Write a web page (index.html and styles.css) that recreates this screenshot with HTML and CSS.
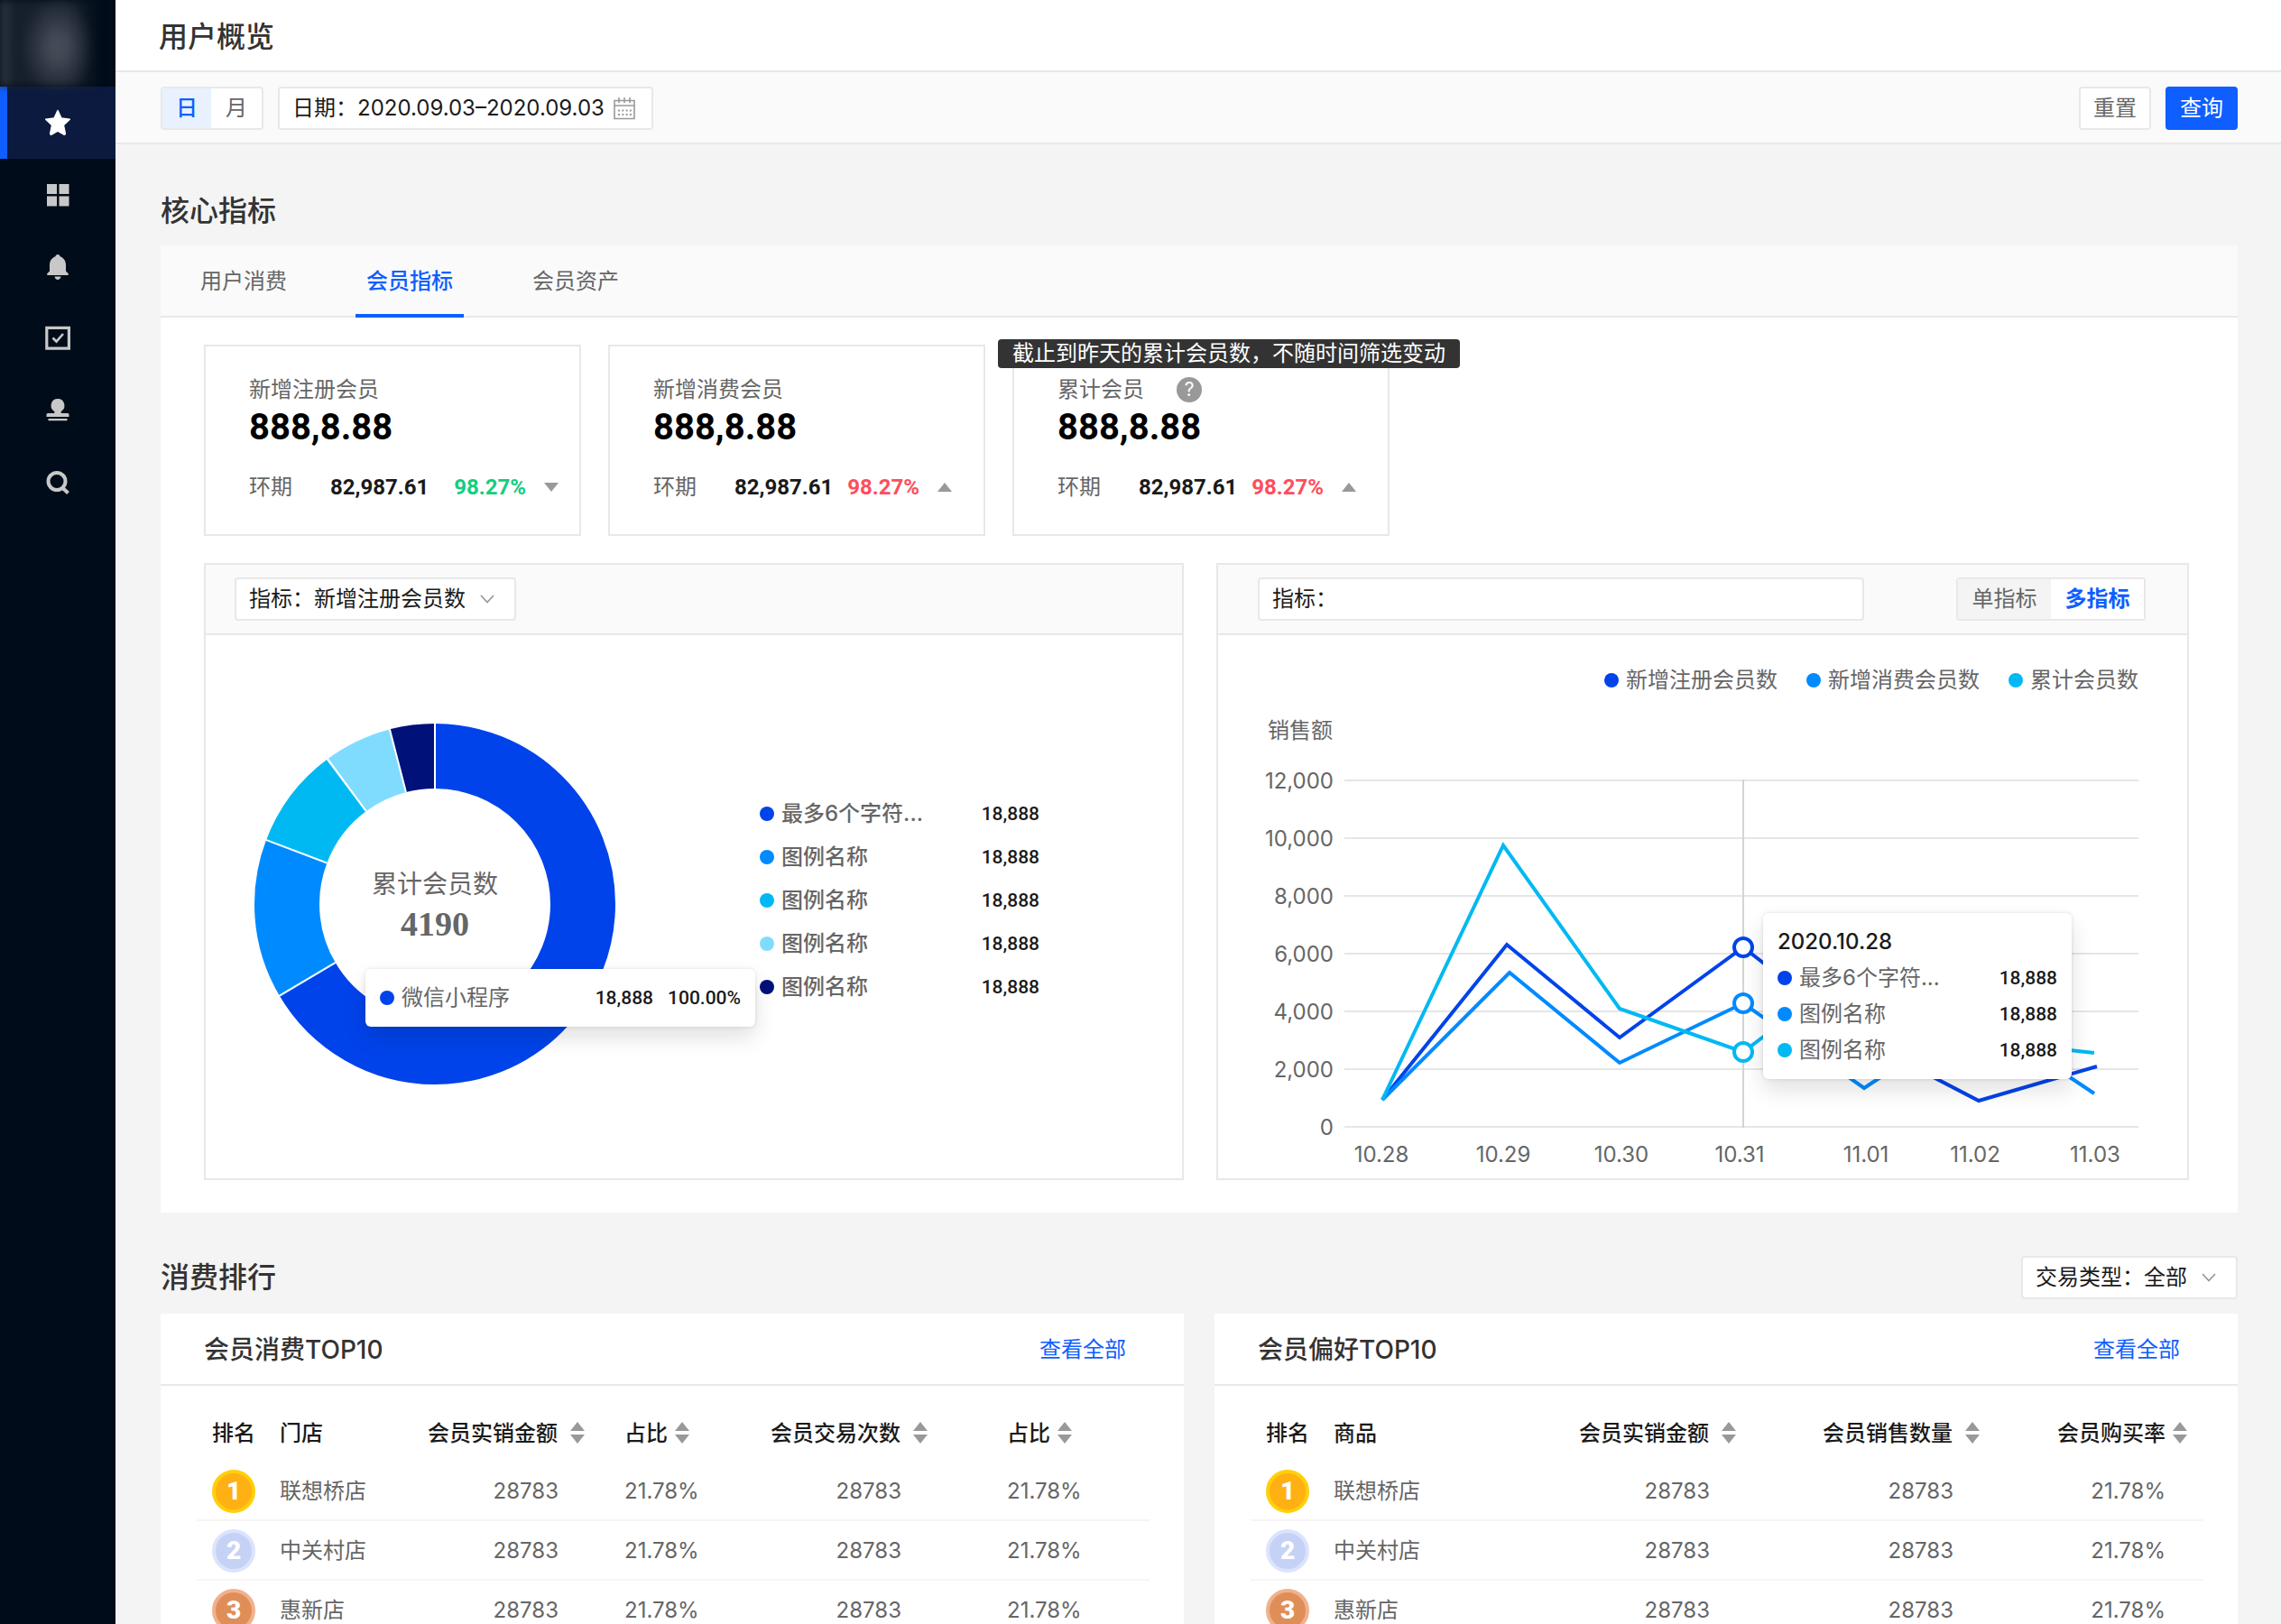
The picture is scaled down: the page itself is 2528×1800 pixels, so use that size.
FILE: index.html
```html
<!DOCTYPE html>
<html lang="zh-CN">
<head>
<meta charset="utf-8">
<title>用户概览</title>
<link rel="stylesheet" href="styles.css">
</head>
<body>
<div class="app">
  <nav class="sidebar">
    <div class="brand"></div>
    <a class="nav-item nav-item--active" href="#" aria-label="收藏"><svg width="32" height="32" viewBox="0 0 32 32"><path d="M16 2.500l4 8.600 9.300 1.100-6.900 6.400 1.900 9.400c.1.900-.6 1.400-1.400 1L16 25l-6.900 4c-.8.400-1.500-.1-1.400-1l1.900-9.400-6.900-6.400 9.300-1.100z" stroke="currentColor" stroke-width="1.500" stroke-linejoin="round"/></svg></a>
    <a class="nav-item" href="#" aria-label="概览"><svg width="32" height="32" viewBox="0 0 32 32"><path d="M4 4h11v11H4zM17.500 4h11v11h-11zM4 17.500h11v11H4zM17.500 17.500h11v11h-11z"/></svg></a>
    <a class="nav-item" href="#" aria-label="通知"><svg width="32" height="32" viewBox="0 0 32 32"><path d="M16 2c1.400 0 2.200 1 2.500 2.200 4 1.400 6.500 5 6.500 9.300v7l2.500 2.500c1 1 .5 2-.8 2H5.300c-1.300 0-1.800-1-.8-2L7 20.500v-7c0-4.300 2.500-7.900 6.500-9.300C13.800 3 14.600 2 16 2zM12.500 26.500h7c-.3 2.200-1.800 3.500-3.500 3.500s-3.200-1.300-3.500-3.500z"/></svg></a>
    <a class="nav-item" href="#" aria-label="任务"><svg width="32" height="32" viewBox="0 0 32 32" fill="none" stroke="currentColor" stroke-width="3.200"><path d="M3.800 3.300h24.600v22.800H3.800z"/><path d="M10.500 14.500l4 4 7.500-8.500" stroke-width="2.600"/></svg></a>
    <a class="nav-item" href="#" aria-label="会员"><svg width="32" height="32" viewBox="0 0 32 32"><path d="M16 2a7.300 7.500 0 0 1 4.500 13.500c-1 .8-1.500 1.500-.5 2.500h7a1.500 1.500 0 0 1 1.500 1.500V22h-25v-2.500A1.500 1.500 0 0 1 5 18h7c1-1 .5-1.700-.5-2.500A7.300 7.500 0 0 1 16 2zM5.500 24h21v2.200h-21z"/></svg></a>
    <a class="nav-item" href="#" aria-label="搜索"><svg width="32" height="32" viewBox="0 0 32 32" fill="none" stroke="currentColor" stroke-width="4"><circle cx="15" cy="13.500" r="9.500"/><path d="M20.500 20l7 6.500"/></svg></a>
  </nav>

  <main class="main">
    <header class="page-header"><h1 class="page-title">用户概览</h1></header>

    <form class="filters">
      <div class="segment">
        <button class="segment-btn segment-btn--day" type="button">日</button>
        <button class="segment-btn" type="button">月</button>
      </div>
      <div class="field field--date">
        <label for="date-range">日期：</label>
        <input id="date-range" class="field-input" type="text" value="2020.09.03–2020.09.03">
        <svg class="calendar" width="24" height="26" viewBox="0 0 24 26" fill="none" stroke="#999" stroke-width="1.600"><path d="M1 4.500h22v20H1zM1 10h22M6 1v6M12 1v6M18 1v6"/><path d="M5 15.500h15M5 20h15" stroke-width="2" stroke-dasharray="2 2.300"/></svg>
      </div>
      <div class="filter-actions">
        <button class="btn" type="reset">重置</button>
        <button class="btn btn--primary" type="button">查询</button>
      </div>
    </form>

    <div class="content">
      <h2 class="section-title">核心指标</h2>
      <section class="panel">
        <div class="tabs" role="tablist">
          <button class="tab" role="tab" type="button">用户消费</button>
          <button class="tab tab--active" role="tab" type="button">会员指标</button>
          <button class="tab" role="tab" type="button">会员资产</button>
        </div>

        <div class="metrics">
          <article class="metric">
            <div class="metric-label">新增注册会员</div>
            <div class="metric-value">888,8.88</div>
            <div class="metric-row metric-row--down"><span class="metric-period">环期</span><b class="metric-num">82,987.61</b><b class="metric-rate">98.27%</b><svg width="16" height="10" viewBox="0 0 16 10"><path d="M0 0h16l-8 10z"/></svg></div>
          </article>
          <article class="metric">
            <div class="metric-label">新增消费会员</div>
            <div class="metric-value">888,8.88</div>
            <div class="metric-row"><span class="metric-period">环期</span><b class="metric-num">82,987.61</b><b class="metric-rate">98.27%</b><svg width="16" height="10" viewBox="0 0 16 10"><path d="M0 10h16L8 0z"/></svg></div>
          </article>
          <article class="metric">
            <div class="hint" role="tooltip">截止到昨天的累计会员数，不随时间筛选变动</div>
            <div class="metric-label">累计会员<button class="help" type="button">?</button></div>
            <div class="metric-value">888,8.88</div>
            <div class="metric-row"><span class="metric-period">环期</span><b class="metric-num">82,987.61</b><b class="metric-rate">98.27%</b><svg width="16" height="10" viewBox="0 0 16 10"><path d="M0 10h16L8 0z"/></svg></div>
          </article>
        </div>

        <div class="charts">
          <article class="chart">
            <header class="chart-head">
              <div class="field">
                <label for="metric">指标：</label>
                <select id="metric" class="field-select field-select--metric"><option>新增注册会员数</option></select>
              </div>
            </header>
            <div class="donut-body">
              <div class="donut">
                <svg viewBox="0 0 400 400" fill="none">
                  <g transform="rotate(-90 200 200)" stroke-width="72">
                    <circle cx="200" cy="200" r="164" pathLength="360" stroke="#0043ea" stroke-dasharray="240 120"/>
                    <circle cx="200" cy="200" r="164" pathLength="360" stroke="#008aff" stroke-dasharray="52 308" stroke-dashoffset="-239"/>
                    <circle cx="200" cy="200" r="164" pathLength="360" stroke="#00b9f2" stroke-dasharray="33 327" stroke-dashoffset="-290.500"/>
                    <circle cx="200" cy="200" r="164" pathLength="360" stroke="#80dcff" stroke-dasharray="23 337" stroke-dashoffset="-323"/>
                    <circle cx="200" cy="200" r="164" pathLength="360" stroke="#00117a" stroke-dasharray="14.500 345.500" stroke-dashoffset="-345.500"/>
                    <g stroke="#fff" stroke-width="2">
                      <path d="M328 200h73"/>
                      <path d="M328 200h73" transform="rotate(239.500 200 200)"/>
                      <path d="M328 200h73" transform="rotate(290.800 200 200)"/>
                      <path d="M328 200h73" transform="rotate(323.500 200 200)"/>
                      <path d="M328 200h73" transform="rotate(345.500 200 200)"/>
                    </g>
                  </g>
                </svg>
                <div class="donut-text"><span>累计会员数</span><b class="donut-total">4190</b></div>
                <div class="tip tip--donut" role="tooltip">
                  <div class="tip-row"><i class="dot c1"></i><span class="tip-name">微信小程序</span><span class="num">18,888</span><span class="num">100.00%</span></div>
                </div>
              </div>
              <ul class="legend">
                <li><i class="dot c1"></i><span class="tip-name">最多6个字符...</span><span class="num">18,888</span></li>
                <li><i class="dot c2"></i><span class="tip-name">图例名称</span><span class="num">18,888</span></li>
                <li><i class="dot c3"></i><span class="tip-name">图例名称</span><span class="num">18,888</span></li>
                <li><i class="dot c4"></i><span class="tip-name">图例名称</span><span class="num">18,888</span></li>
                <li><i class="dot c5"></i><span class="tip-name">图例名称</span><span class="num">18,888</span></li>
              </ul>
            </div>
          </article>

          <article class="chart">
            <header class="chart-head chart-head--wide">
              <div class="field field--wide">
                <label for="metrics">指标：</label>
                <input id="metrics" class="field-input" type="text">
              </div>
              <div class="segment segment--metric">
                <button class="segment-btn" type="button">单指标</button>
                <button class="segment-btn segment-btn--on" type="button">多指标</button>
              </div>
            </header>
            <div class="line-body">
              <div class="line-legend">
                <span><i class="dot c1"></i>新增注册会员数</span>
                <span><i class="dot c2"></i>新增消费会员数</span>
                <span><i class="dot c3"></i>累计会员数</span>
              </div>
              <div class="plot">
                <svg class="plot-svg" viewBox="0 0 966 506" fill="none">
                  <g class="axis">
                    <text x="1" y="24">销售额</text>
                    <g text-anchor="end">
                      <text x="74" y="80">12,000</text><text x="74" y="144">10,000</text><text x="74" y="208">8,000</text><text x="74" y="272">6,000</text><text x="74" y="336">4,000</text><text x="74" y="400">2,000</text><text x="74" y="464">0</text>
                    </g>
                    <g text-anchor="middle">
                      <text x="127" y="494">10.28</text><text x="262" y="494">10.29</text><text x="393" y="494">10.30</text><text x="524" y="494">10.31</text><text x="664" y="494">11.01</text><text x="785" y="494">11.02</text><text x="918" y="494">11.03</text>
                    </g>
                  </g>
                  <path d="M86 71h880M86 135h880M86 199h880M86 263h880M86 327h880M86 391h880M86 455h880" stroke="#e6e6e6" stroke-width="2"/>
                  <path d="M528 70v386" stroke="#d4d4d4" stroke-width="2"/>
                  <g stroke-width="4">
                    <path d="M128 425L266 253L391 356L528 256L662 360L789 426L920 388" stroke="#0043ea"/>
                    <path d="M128 425L269 284L391 384L528 318L662 412L786 330L890 400L917 418" stroke="#008aff"/>
                    <path d="M128 425L262 143L391 324L528 372L662 270L786 350L890 370L917 373" stroke="#00b9f2"/>
                    <g fill="#fff">
                      <circle cx="528" cy="256" r="10" stroke="#0043ea"/>
                      <circle cx="528" cy="318" r="10" stroke="#008aff"/>
                      <circle cx="528" cy="372" r="10" stroke="#00b9f2"/>
                    </g>
                  </g>
                </svg>
                <div class="tip tip--line" role="tooltip">
                  <div class="tip-title">2020.10.28</div>
                  <div class="tip-row"><i class="dot c1"></i><span class="tip-name">最多6个字符...</span><span class="num">18,888</span></div>
                  <div class="tip-row"><i class="dot c2"></i><span class="tip-name">图例名称</span><span class="num">18,888</span></div>
                  <div class="tip-row"><i class="dot c3"></i><span class="tip-name">图例名称</span><span class="num">18,888</span></div>
                </div>
              </div>
            </div>
          </article>
        </div>
      </section>

      <div class="section-bar">
        <h2 class="section-title">消费排行</h2>
        <div class="field">
          <label for="trade">交易类型：</label>
          <select id="trade" class="field-select field-select--trade"><option>全部</option></select>
        </div>
      </div>

      <div class="ranks">
        <section class="rank">
          <header class="rank-head"><h3 class="rank-title">会员消费TOP10</h3><a href="#">查看全部</a></header>
          <table class="table table--store">
            <colgroup><col class="w-rank"><col class="w-name"><col class="w-amount"><col class="w-ratio"><col class="w-count"><col class="w-last"></colgroup>
            <thead><tr><th>排名</th><th>门店</th><th class="r">会员实销金额<button class="sort" type="button" aria-label="排序"></button></th><th class="pl">占比<button class="sort sort--near" type="button" aria-label="排序"></button></th><th class="r">会员交易次数<button class="sort" type="button" aria-label="排序"></button></th><th class="pl-wide">占比<button class="sort sort--near" type="button" aria-label="排序"></button></th></tr></thead>
            <tbody>
              <tr><td><span class="medal medal--1">1</span></td><td>联想桥店</td><td class="r">28783</td><td class="pl">21.78%</td><td class="r">28783</td><td class="pl-wide">21.78%</td></tr>
              <tr><td><span class="medal medal--2">2</span></td><td>中关村店</td><td class="r">28783</td><td class="pl">21.78%</td><td class="r">28783</td><td class="pl-wide">21.78%</td></tr>
              <tr><td><span class="medal medal--3">3</span></td><td>惠新店</td><td class="r">28783</td><td class="pl">21.78%</td><td class="r">28783</td><td class="pl-wide">21.78%</td></tr>
            </tbody>
          </table>
        </section>
        <section class="rank">
          <header class="rank-head"><h3 class="rank-title">会员偏好TOP10</h3><a href="#">查看全部</a></header>
          <table class="table table--goods">
            <colgroup><col class="w-rank"><col class="w-goods"><col class="w-amount"><col class="w-sales"><col class="w-rate"></colgroup>
            <thead><tr><th>排名</th><th>商品</th><th class="r">会员实销金额<button class="sort" type="button" aria-label="排序"></button></th><th class="r">会员销售数量<button class="sort" type="button" aria-label="排序"></button></th><th class="r-end">会员购买率<button class="sort sort--near" type="button" aria-label="排序"></button></th></tr></thead>
            <tbody>
              <tr><td><span class="medal medal--1">1</span></td><td>联想桥店</td><td class="r">28783</td><td class="r">28783</td><td class="r-end">21.78%</td></tr>
              <tr><td><span class="medal medal--2">2</span></td><td>中关村店</td><td class="r">28783</td><td class="r">28783</td><td class="r-end">21.78%</td></tr>
              <tr><td><span class="medal medal--3">3</span></td><td>惠新店</td><td class="r">28783</td><td class="r">28783</td><td class="r-end">21.78%</td></tr>
            </tbody>
          </table>
        </section>
      </div>
    </div>
  </main>
</div>
</body>
</html>
```
FILE: styles.css
```css
* { box-sizing: border-box; }
body { margin: 0; font: 24px/32px Inter, "Noto Sans CJK SC", sans-serif; color: #666; background: #f4f4f4; }
h1, h2, h3, ul { margin: 0; padding: 0; font-weight: 500; list-style: none; }
button, input, select { font: inherit; color: inherit; margin: 0; padding: 0; border: 0; background: none; }
a { color: #0f5eff; text-decoration: none; }
svg { display: block; flex: none; }

.app { display: flex; height: 100vh; }

/* Sidebar */
.sidebar { flex: none; width: 128px; background: #000c19; }
.brand {
  height: 96px;
  background:
    radial-gradient(ellipse 40px 56px at 64px 52px, #454a57 20%, transparent 100%),
    linear-gradient(90deg, #333b45, #16202c 14px, #16202c 80px, transparent 112px);
  filter: blur(4px);
}
.nav-item { display: flex; align-items: center; justify-content: center; height: 80px; color: #c8c8c8; border-left: 8px solid transparent; padding-right: 8px; }
.nav-item svg { fill: currentColor; }
.nav-item svg[fill="none"] { fill: none; }
.nav-item--active { color: #fff; background: #0c1a40; border-left-color: #0f5eff; background-clip: padding-box; }

/* Main column */
.main { flex: 1; min-width: 0; overflow-y: auto; scrollbar-width: none; }
.page-header { height: 80px; padding: 17px 48px 0; background: #fff; border-bottom: 2px solid #e8e8e8; }
.page-title, .section-title { font-size: 32px; line-height: 48px; color: #333; }
.filters { display: flex; gap: 16px; height: 80px; padding: 16px 48px 14px 50px; background: #fafafa; border-bottom: 2px solid #e8e8e8; }
.filter-actions { display: flex; gap: 16px; margin-left: auto; }
.content { padding: 50px 48px 0 50px; }

/* Controls */
.btn { width: 80px; height: 48px; background: #fff; border: 2px solid #e8e8e8; border-radius: 4px; }
.btn--primary { color: #fff; background: #0f5eff; border-color: #0f5eff; }
.segment { display: flex; height: 48px; background: #fff; border: 2px solid #e8e8e8; border-radius: 4px; }
.segment-btn { width: 56px; }
.segment-btn--day { width: 54px; color: #0f5eff; font-weight: 500; background: #e9f1ff; }
.segment--metric .segment-btn { width: 103px; background: #f4f4f4; }
.segment--metric .segment-btn--on { color: #0f5eff; font-weight: 700; background: #fff; }
.field { display: flex; align-items: center; height: 48px; padding: 0 14px; color: #1a1a1a; background: #fff; border: 2px solid #e8e8e8; border-radius: 4px; }
.field label { flex: none; }
.field-input { flex: 1; min-width: 0; outline: 0; }
.field--date { width: 416px; padding-right: 18px; }
.field--wide { flex: 0 1 672px; }
.field-select {
  appearance: none; outline: 0; height: 44px; padding-right: 40px;
  background: url("data:image/svg+xml,%3Csvg xmlns='http://www.w3.org/2000/svg' width='16' height='10' fill='none' stroke='%23999' stroke-width='1.8'%3E%3Cpath d='M1 1l7 7.500L15 1'/%3E%3C/svg%3E") no-repeat right 8px center;
}
.field-select--metric { width: 208px; }
.field-select--trade { width: 88px; }

/* Core metrics */
.panel { margin-top: 14px; padding-bottom: 36px; background: #fff; }
.tabs { display: flex; gap: 64px; height: 80px; padding-left: 32px; background: #fafafa; border-bottom: 2px solid #e8e8e8; }
.tab { height: 80px; padding: 4px 12px 0; border-bottom: 4px solid transparent; }
.tab--active { color: #0f5eff; font-weight: 500; border-bottom-color: #0f5eff; }
.metrics { display: flex; gap: 30px; padding: 30px 54px 0 48px; }
.metric { position: relative; flex: 0 1 418px; height: 212px; padding: 30px 0 0 48px; border: 2px solid #e8e8e8; }
.metric-label { display: flex; align-items: center; gap: 36px; height: 36px; }
.metric-value { font: 700 40px/48px Roboto, sans-serif; color: #000; }
.metric-row { display: flex; align-items: center; margin-top: 24px; line-height: 36px; white-space: nowrap; }
.metric-row svg { margin-left: 20px; fill: #999; }
.metric-num, .metric-rate { font: 700 24px/36px Roboto, sans-serif; }
.metric-num { margin: 0 16px 0 42px; color: #1a1a1a; }
.metric-rate { color: #ff4d5b; }
.metric-row--down .metric-num { margin-right: 28px; }
.metric-row--down .metric-rate { color: #13ce80; }
.help { width: 28px; height: 28px; border-radius: 50%; font-size: 21px; line-height: 28px; color: #fff; background: #999; }
.hint { position: absolute; left: -18px; top: -8px; padding: 0 16px; line-height: 32px; white-space: nowrap; color: #fff; background: #333; border-radius: 4px; }

/* Charts */
.charts { display: grid; grid-template-columns: 1086fr 1078fr; gap: 36px; padding: 30px 54px 0 48px; }
.chart { border: 2px solid #e8e8e8; }
.chart-head { display: flex; align-items: center; height: 78px; padding: 0 46px 0 32px; background: #fafafa; border-bottom: 2px solid #e8e8e8; }
.chart-head--wide { justify-content: space-between; padding-left: 44px; }
.dot { flex: none; width: 16px; height: 16px; border-radius: 50%; }
.c1 { background: #0043ea; }
.c2 { background: #008aff; }
.c3 { background: #00b9f2; }
.c4 { background: #80dcff; }
.c5 { background: #00117a; }
.num { font: 500 21px/32px Roboto, sans-serif; color: #1a1a1a; }
.donut-body { display: flex; align-items: center; gap: 160px; padding: 98px 54px 104px; }
.donut { position: relative; flex: none; width: 400px; height: 400px; }
.donut-text { position: absolute; inset: 156px 0 auto; display: flex; flex-direction: column; align-items: center; font-size: 28px; line-height: 44px; }
.donut-total { font: 700 38px/44px "Liberation Serif", serif; }
.legend { flex: 0 1 310px; padding-bottom: 8px; }
.legend li { display: flex; align-items: center; gap: 8px; height: 48px; }
.tip-name { margin-right: auto; white-space: nowrap; }
.tip { position: absolute; padding: 12px 16px; background: #fff; border-radius: 6px; box-shadow: 0 12px 24px rgba(0, 0, 0, .12), 0 0 4px rgba(0, 0, 0, .12); }
.tip-row { display: flex; align-items: center; gap: 8px; height: 40px; }
.tip--donut { left: 123px; top: 272px; width: 432px; }
.tip--donut .num + .num { margin-left: 8px; }
.tip--line { right: 74px; top: 218px; width: 342px; }
.tip-title { font-weight: 500; line-height: 40px; color: #1a1a1a; }
.line-body { padding: 34px 54px 6px; }
.line-legend { display: flex; justify-content: flex-end; gap: 32px; }
.line-legend span { display: flex; align-items: center; gap: 8px; }
.plot { position: relative; margin-top: 24px; }
.plot-svg { overflow: visible; }
.axis { fill: #666; font-size: 24px; }

/* Rankings */
.section-bar { display: flex; justify-content: space-between; margin-top: 48px; }
.ranks { display: grid; grid-template-columns: 1fr 1fr; gap: 34px; margin-top: 16px; }
.rank { background: #fff; }
.rank-head { display: flex; align-items: center; justify-content: space-between; height: 80px; padding: 2px 64px 0 48px; border-bottom: 2px solid #e8e8e8; }
.rank-title { font-size: 28px; line-height: 40px; color: #333; }
.table { table-layout: fixed; width: calc(100% - 78px); margin: 22px 38px 0 40px; border-collapse: separate; border-spacing: 0; text-align: left; }
.table th, .table td { padding: 0; white-space: nowrap; }
.table th { height: 62px; font-weight: 500; color: #1a1a1a; }
.table td { height: 66px; padding-top: 2px; border-bottom: 2px solid #f5f5f5; }
.table th:first-child, .table td:first-child { padding-left: 17px; }
.table .r, .table .r-end { text-align: right; }
.table td.r { padding-right: 29px; }
.table th.r-end { padding-right: 18px; }
.table td.r-end { padding-right: 42px; }
.table .pl { padding-left: 44px; }
.table .pl-wide { padding-left: 88px; }
.w-rank { width: 92px; }
.w-name { width: 122px; }
.w-goods { width: 230px; }
.w-amount { width: 216px; }
.w-ratio { width: 160px; }
.w-count { width: 220px; }
.w-last { width: 246px; }
.w-sales { width: 270px; }
.w-rate { width: 248px; }
.sort { display: inline-grid; gap: 4px; margin-left: 14px; vertical-align: middle; position: relative; bottom: 2px; }
.sort--near { margin-left: 8px; }
.sort::before, .sort::after { content: ""; border: 8px solid transparent; }
.sort::before { border-top: 0; border-bottom: 10px solid #999; }
.sort::after { border-bottom: 0; border-top: 10px solid #999; }
.medal { display: block; width: 48px; height: 48px; border: 4px solid; border-radius: 50%; font: 900 28px/40px Roboto, sans-serif; text-align: center; color: #fff; }
.medal--1 { background: #ffb012; border-color: #ffcf0a; }
.medal--2 { background: #c6d2f5; border-color: #dbe4fc; }
.medal--3 { background: #e08e58; border-color: #f0b28c; }
```
